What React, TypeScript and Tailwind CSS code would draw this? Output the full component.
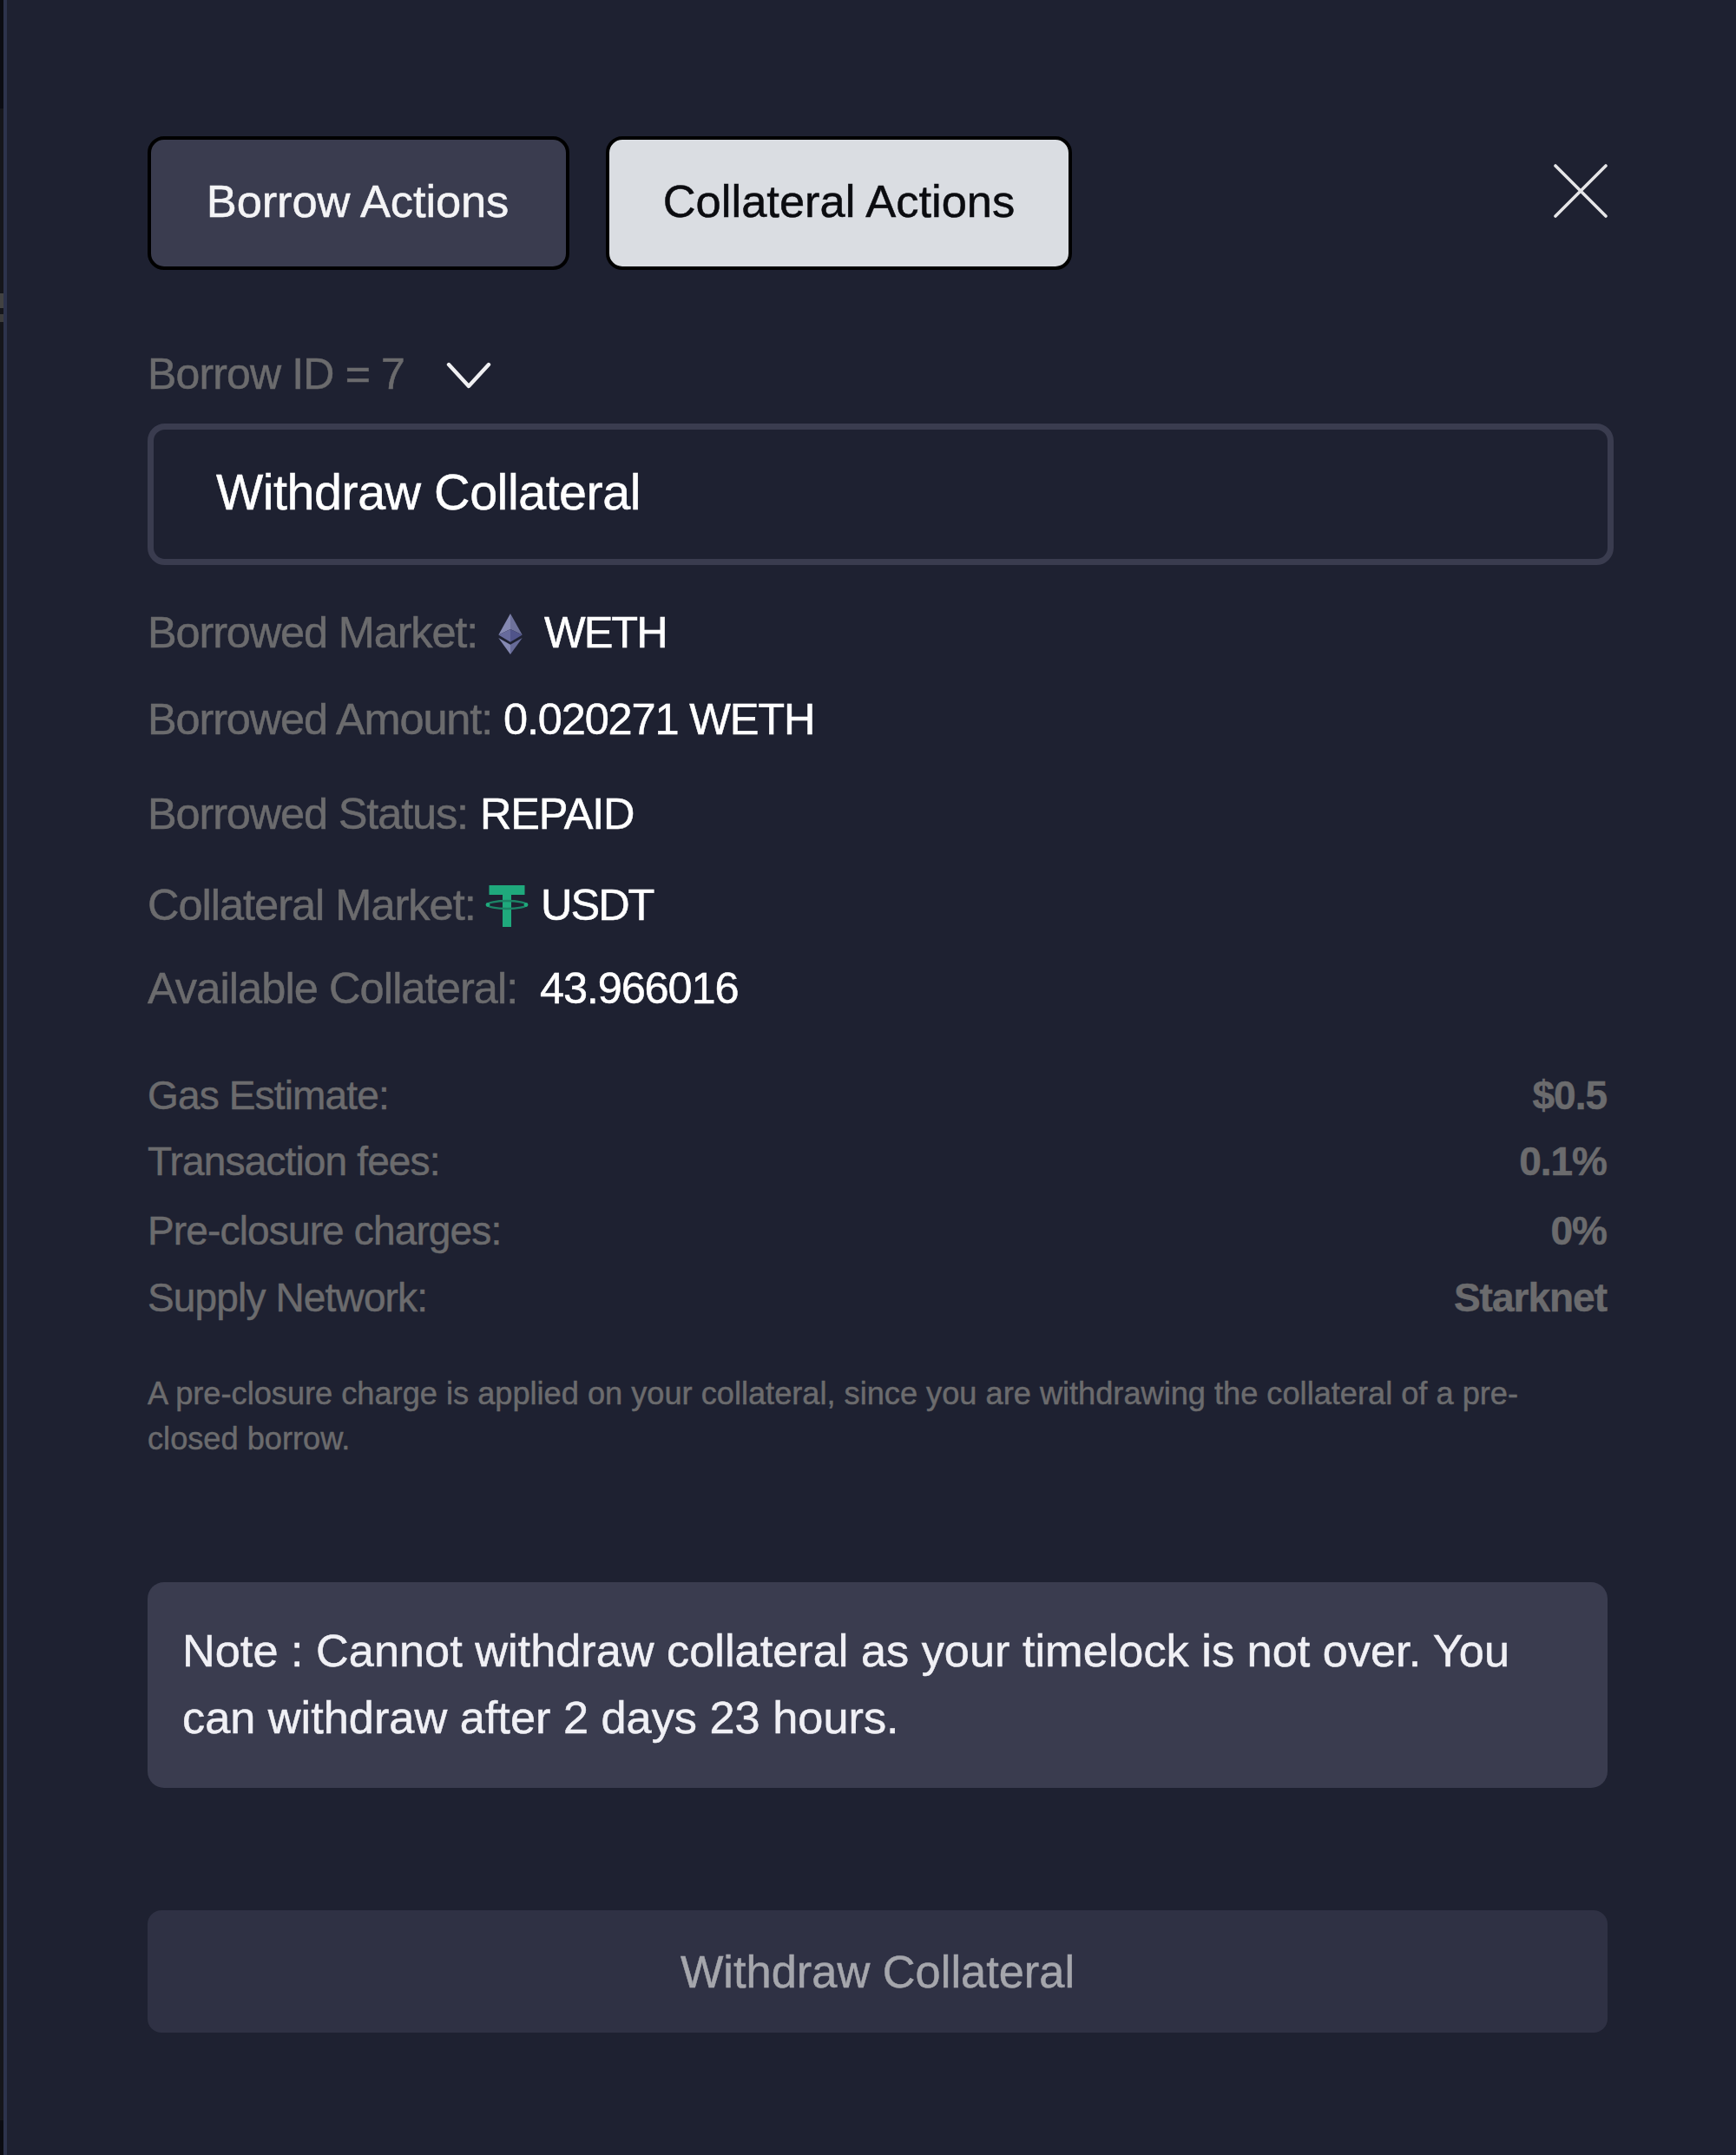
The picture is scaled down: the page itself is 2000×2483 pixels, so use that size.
import React from "react";

const details = [
  { label: "Gas Estimate:", value: "$0.5", row: "mt-[68px]" },
  { label: "Transaction fees:", value: "0.1%", row: "mt-[26px]" },
  { label: "Pre-closure charges:", value: "0%", row: "mt-[30px]" },
  { label: "Supply Network:", value: "Starknet", row: "mt-[27px]" },
];

function EthIcon() {
  return (
    <svg className="mt-[2px] h-[49px] w-[32px]" viewBox="0 0 32 50">
      <path d="M16 1 2 26 16 19.5z" fill="#8589b2" />
      <path d="M16 1v18.5L30 26z" fill="#6e729b" />
      <path d="M16 19.500 2 26 16 34.500z" fill="#676b9c" />
      <path d="M16 19.500 30 26 16 34.500z" fill="#50548a" />
      <path d="M2 29.500 16 37.500V49z" fill="#8589b2" />
      <path d="M30 29.500 16 37.500V49z" fill="#676b98" />
    </svg>
  );
}

function TetherIcon() {
  return (
    <svg className="mt-[1px] h-[50px] w-[50px]" viewBox="0 0 50 50">
      <path d="M4.500 1h41v11H30v37H20V12H4.500z" fill="#1fa97c" />
      <ellipse cx="25" cy="23.500" rx="22.500" ry="4.500" fill="none" stroke="#1c8466" strokeWidth="2.400" />
      <circle cx="3" cy="23.500" r="2.400" fill="#1fa97c" />
      <circle cx="47" cy="23.500" r="2.400" fill="#1fa97c" />
    </svg>
  );
}

export default function App() {
  return (
    <div className="flex h-[2483px] w-[2000px] overflow-hidden bg-[#1e2131] font-['Liberation_Sans',sans-serif] text-white [-webkit-text-stroke:0.5px_currentColor]">
      <div className="flex w-[4px] shrink-0 flex-col bg-[#15161b]">
        <div className="h-[125px] bg-[#0b0c13]" />
        <div className="mt-[213px] h-[17px] bg-[#424242]" />
        <div className="mt-[7px] h-[9px] bg-[#3c3c3c]" />
        <div className="mt-auto h-[40px] bg-[#0b0c13]" />
      </div>
      <main className="flex grow flex-col border-l-[4px] border-[#2d334c] pt-[157px] pl-[162px]">
        <header className="flex h-[154px] w-[1682px] items-start">
          <button className="flex h-[154px] w-[486px] items-center justify-center rounded-[19px] border-[4px] border-black bg-[#3a3c4f] pr-[2px] pb-[3px] text-[52.500px] tracking-[-0.12px] text-[#f4f4f6]">
            Borrow Actions
          </button>
          <button className="ml-[42px] flex h-[154px] w-[537px] items-center justify-center rounded-[19px] border-[4px] border-black bg-[#dadde2] pb-[3px] text-[52.500px] text-[#0b0c10]">
            Collateral Actions
          </button>
          <svg className="mt-[32px] ml-auto h-[62px] w-[62px]" viewBox="0 0 62 62" stroke="#e6e6e8" strokeWidth="3.600" strokeLinecap="round">
            <path d="M2 2l58 58M60 2L2 60" />
          </svg>
        </header>

        <div className="mt-[90px] flex h-[60px] items-center text-[50px] leading-[60px] tracking-[-0.85px] text-[#6b6b6d]">
          <span className="w-[344px]">Borrow ID = 7</span>
          <svg className="mt-[4px] h-[32px] w-[52px]" viewBox="0 0 52 32" fill="none" stroke="#f0f0f2" strokeWidth="4.400" strokeLinecap="round" strokeLinejoin="round">
            <path d="M3 3l23 25L49 3" />
          </svg>
        </div>
        <div className="mt-[27px] flex h-[163px] w-[1689px] items-center rounded-[20px] border-[7px] border-[#3a3c4f] pb-[5px] pl-[72px] text-[57.500px] tracking-[-0.5px]">
          Withdraw Collateral
        </div>

        <div className="mt-[48px] flex h-[60px] items-center text-[50.500px] leading-[60px] tracking-[-1.15px]">
          <span className="w-[402px] text-[#6b6b6d]">Borrowed Market:</span>
          <EthIcon />
          <span className="ml-[23px] tracking-[-2px]">WETH</span>
        </div>
        <div className="mt-[40px] flex h-[60px] items-center text-[50.500px] leading-[60px] tracking-[-1.15px]">
          <span className="w-[410px] text-[#6b6b6d]">Borrowed Amount:</span>
          <span>0.020271 WETH</span>
        </div>
        <div className="mt-[49px] flex h-[60px] items-center text-[50.500px] leading-[60px] tracking-[-1.15px]">
          <span className="w-[383px] text-[#6b6b6d]">Borrowed Status:</span>
          <span>REPAID</span>
        </div>
        <div className="mt-[45px] flex h-[60px] items-center text-[50.500px] leading-[60px] tracking-[-1.15px]">
          <span className="w-[389px] tracking-[-1px] text-[#6b6b6d]">Collateral Market:</span>
          <TetherIcon />
          <span className="ml-[14px] tracking-[-2px]">USDT</span>
        </div>
        <div className="mt-[36px] flex h-[60px] items-center text-[50.500px] leading-[60px] tracking-[-1.15px]">
          <span className="w-[452px] tracking-[-0.9px] text-[#6b6b6d]">Available Collateral:</span>
          <span>43.966016</span>
        </div>

        {details.map((d) => (
          <div
            key={d.label}
            className={`${d.row} flex h-[50px] w-[1681px] items-center justify-between text-[46px] leading-[50px] tracking-[-0.85px] text-[#6b6b6d]`}
          >
            <span>{d.label}</span>
            <span className="font-bold tracking-[-1px]">{d.value}</span>
          </div>
        ))}

        <p className="mt-[60px] h-[105px] w-[1650px] text-[36.200px] leading-[52.400px] text-[#6b6b6d]">
          A pre-closure charge is applied on your collateral, since you are withdrawing the collateral of a pre-closed borrow.
        </p>

        <div className="mt-[138px] h-[237px] w-[1682px] rounded-[19px] bg-[#3a3c4f] px-[40px] pt-[41px] text-[52.300px] leading-[76.500px] text-[#f0f0f5]">
          Note : Cannot withdraw collateral as your timelock is not over. You can withdraw after 2 days 23 hours.
        </div>
        <button className="mt-[141px] flex h-[141px] w-[1682px] items-center justify-center rounded-[16px] bg-[#2f3144] pt-[2px] text-[52.400px] text-[#a5a6ac]">
          Withdraw Collateral
        </button>
      </main>
    </div>
  );
}
